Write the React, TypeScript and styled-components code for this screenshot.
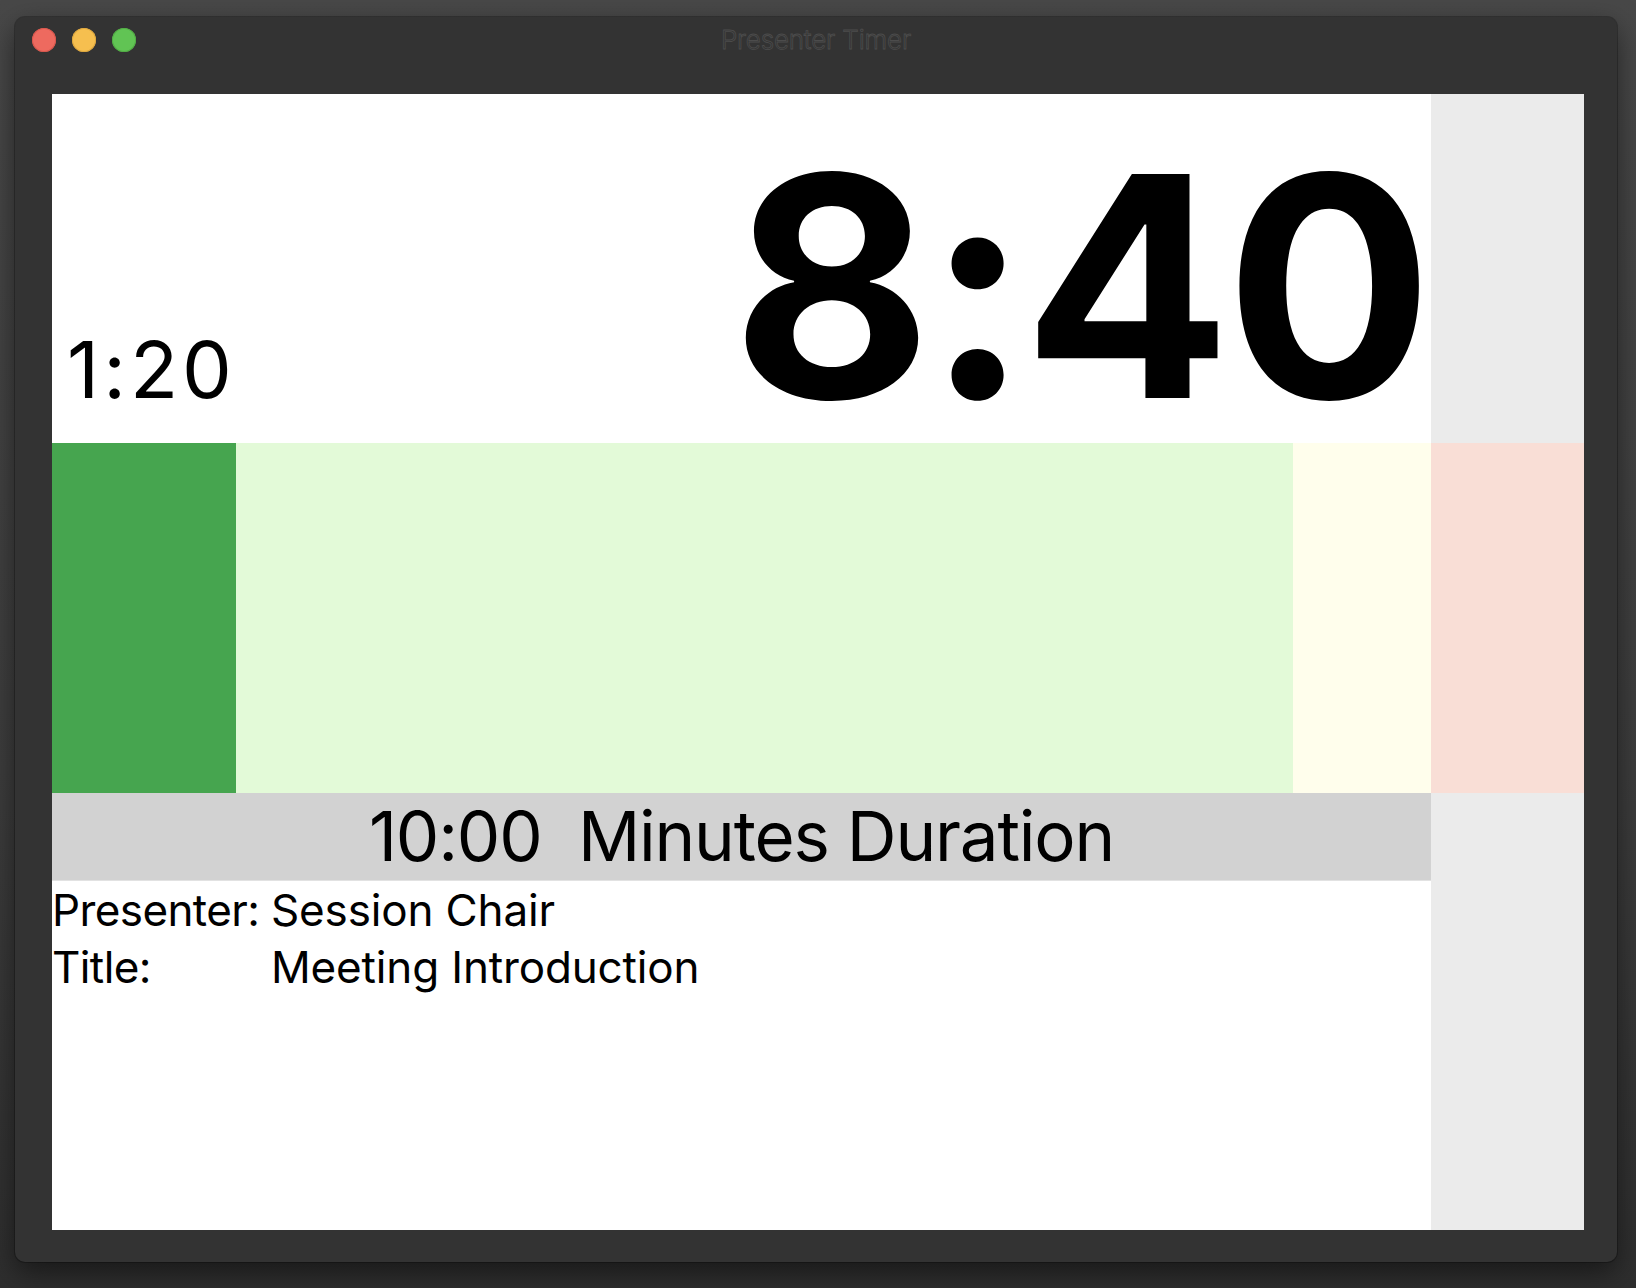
import React from "react";
import styled, { createGlobalStyle } from "styled-components";

const GlobalStyle = createGlobalStyle`
  html, body {
    margin: 0;
    padding: 0;
    background: linear-gradient(180deg, #484848 0%, #3d3d3d 60%, #2e2e2e 100%);
    width: 1636px;
    height: 1288px;
    overflow: hidden;
    font-family: Inter, "Noto Sans", "Liberation Sans", sans-serif;
  }
`;

const Desktop = styled.div`
  width: 1636px;
  height: 1288px;
  padding: 17px 0 0 15px;
  box-sizing: border-box;
`;

const Window = styled.div`
  width: 1602px;
  height: 1245px;
  background: #333333;
  border-radius: 10px;
  box-shadow: 0 10px 28px rgba(0, 0, 0, 0.5), 0 0 0 1px rgba(0, 0, 0, 0.25);
  display: flex;
  flex-direction: column;
`;

const TitleBar = styled.div`
  position: relative;
  height: 77px;
  display: flex;
  justify-content: center;
  padding-top: 10px;
  box-sizing: border-box;
`;

const Lights = styled.div`
  position: absolute;
  left: 17px;
  top: 11px;
  display: flex;
  gap: 16px;
`;

const Light = styled.span<{ $c: string; $b: string }>`
  width: 24px;
  height: 24px;
  border-radius: 50%;
  background: ${(p) => p.$c};
  box-shadow: inset 0 0 0 1px ${(p) => p.$b};
`;

const WindowTitle = styled.div`
  font-family: Inter, "Liberation Sans", sans-serif;
  font-size: 26px;
  line-height: 26px;
  font-weight: 300;
  color: #333333;
  -webkit-text-stroke: 0.8px #4c4c4c;
  letter-spacing: -0.2px;
`;

const Content = styled.div`
  margin: 0 33px 32px 37px;
  height: 1136px;
  display: flex;
  flex-direction: column;
  background: #ffffff;
`;

const SplitRow = styled.div<{ $h: number }>`
  height: ${(p) => p.$h}px;
  display: grid;
  grid-template-columns: 1379px 153px;
`;

const SideColumn = styled.div`
  background: #ebebeb;
`;

const ClockArea = styled.div`
  background: #ffffff;
  display: flex;
  justify-content: space-between;
  align-items: baseline;
  align-self: end;
  padding: 0 0 3px 15px;
`;

const Elapsed = styled.div`
  font-size: 79px;
  line-height: 1;
  font-weight: 400;
  color: #000;
  letter-spacing: 4px;
`;

const Remaining = styled.div`
  font-size: 308px;
  line-height: 1;
  font-weight: 700;
  color: #000;
  letter-spacing: -6px;
  margin-right: 4px;
`;

const Bar = styled.div`
  height: 350px;
  display: flex;
`;

const Segment = styled.div<{ $c: string }>`
  background: ${(p) => p.$c};
  height: 100%;
  flex: none;
`;

const Lower = styled.div`
  background: #ffffff;
  display: flex;
  flex-direction: column;
`;

const DurationBand = styled.div`
  height: 87px;
  background: #d2d2d2;
  border-bottom: 1px solid #e2e2e2;
  display: flex;
  align-items: center;
  justify-content: center;
  font-size: 69px;
  line-height: 1;
  color: #000;
  white-space: pre;
  letter-spacing: -1.2px;
`;

const InfoGrid = styled.div`
  display: grid;
  grid-template-columns: 219px auto;
  font-size: 44px;
  line-height: 56.6px;
  color: #000;
  letter-spacing: -0.15px;
  padding-top: 1px;
`;

const Label = styled.div`
  letter-spacing: -0.6px;
`;
const Value = styled.div``;

const totalSec = 600;
const elapsedSec = 80;
const warnSec = 540;
const mainWidth = 1379;

export default function App() {
  const elapsedW = (elapsedSec / totalSec) * mainWidth;
  const okW = (warnSec / totalSec) * mainWidth - elapsedW;
  const warnW = mainWidth - elapsedW - okW;
  return (
    <>
      <GlobalStyle />
      <Desktop>
        <Window>
          <TitleBar>
            <Lights>
              <Light $c="#ee6a5f" $b="#d9574d" />
              <Light $c="#f6bf4f" $b="#dea73e" />
              <Light $c="#61c454" $b="#52ad45" />
            </Lights>
            <WindowTitle>Presenter Timer</WindowTitle>
          </TitleBar>
          <Content>
            <SplitRow $h={349}>
              <ClockArea>
                <Elapsed>1:20</Elapsed>
                <Remaining>8:40</Remaining>
              </ClockArea>
              <SideColumn />
            </SplitRow>
            <Bar>
              <Segment $c="#46a54f" style={{ width: elapsedW }} />
              <Segment $c="#e3fad8" style={{ width: okW }} />
              <Segment $c="#fffeec" style={{ width: warnW }} />
              <Segment $c="#f9ded6" style={{ width: 153 }} />
            </Bar>
            <SplitRow $h={437}>
              <Lower>
                <DurationBand>{"10:00  Minutes Duration"}</DurationBand>
                <InfoGrid>
                  <Label>Presenter:</Label>
                  <Value>Session Chair</Value>
                  <Label>Title:</Label>
                  <Value>Meeting Introduction</Value>
                </InfoGrid>
              </Lower>
              <SideColumn />
            </SplitRow>
          </Content>
        </Window>
      </Desktop>
    </>
  );
}
